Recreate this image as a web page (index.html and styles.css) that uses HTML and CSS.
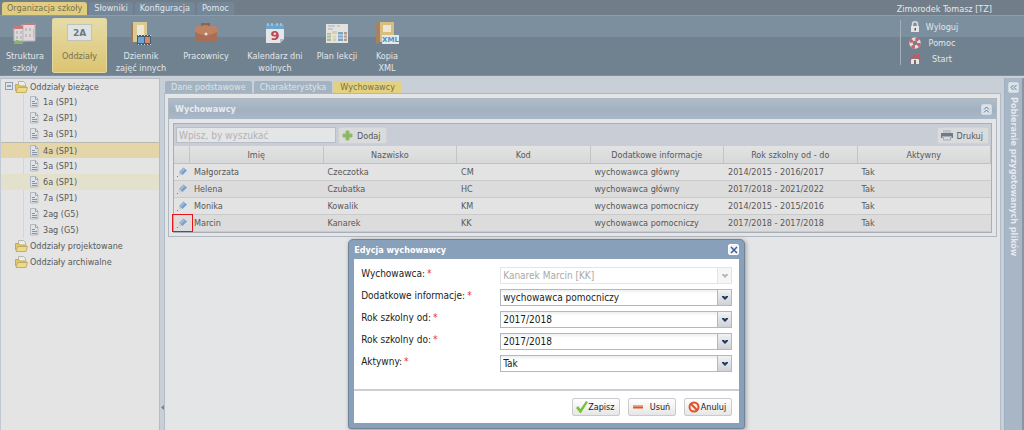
FILE: index.html
```html
<!DOCTYPE html>
<html lang="pl">
<head>
<meta charset="utf-8">
<title>Organizacja szkoły</title>
<meta name="viewport" content="width=device-width, initial-scale=1">
<link rel="stylesheet" href="styles.css">
</head>
<body>
<svg class="defs" aria-hidden="true">
  <symbol id="folder" viewBox="0 0 13 12">
    <path d="M3.500 5V.5h5l2 2V6" fill="#ecebe4" stroke="#b5b5ac"/>
    <path d="M.5 10V3.500h3L5 5h6v5" fill="#dcc66c" stroke="#c0ab62"/>
    <path d="M1 11.500 2.800 6.500h9.700L11 11.500z" fill="#ecd98c" stroke="#c4ae62"/>
  </symbol>
  <symbol id="leaf" viewBox="0 0 10 12">
    <path d="M1.500.5h5l2.500 2.500v8h-7.500z" fill="#dfe3e7" stroke="#b2b8c0"/>
    <path d="M6.500.5v3h2.500" fill="none" stroke="#9ba3ac"/>
    <path d="M3 5.500h3M3 7.500h5M3 9.500h5" stroke="#8493a6"/>
  </symbol>
  <symbol id="pencil" viewBox="0 0 12 12">
    <path d="M3 6 7.500 1.500 11 4.500 6.500 9z" fill="#7b9fc9"/>
    <path d="M4 6 8 2l1 1-4 4z" fill="#a5c1df"/>
    <path d="M3 6 6.500 9 3 9.500z" fill="#c5cfda"/>
    <path d="M1 10h1v1H1z" fill="#777"/>
  </symbol>
  <symbol id="down" viewBox="0 0 8 6"><path d="M1 1h2l1 1 1-1h2v1L4 5 1 2z" fill="currentColor"/></symbol>
</svg>

<header>
  <div class="menubar">
    <nav class="menu">
      <button class="menu-tab active">Organizacja szkoły</button>
      <button class="menu-tab">Słowniki</button>
      <button class="menu-tab">Konfiguracja</button>
      <button class="menu-tab">Pomoc</button>
    </nav>
    <span class="user">Zimorodek Tomasz [TZ]</span>
  </div>
  <div class="ribbon">
    <div class="tools">
      <button class="tool">
        <svg width="24" height="24" viewBox="0 0 24 24"><path d="M1 6 12 3v16H1z" fill="#d9dadb" stroke="#b9babd"/><path d="M10 2h12v17H10z" fill="#dfd8d8" stroke="#b8b3b5"/><path d="M1 4h9v3H1zM10 1h12v2H10z" fill="#c9797c"/><path d="M3 9h2v3H3zM7 9h2v3H7zM3 14h2v3H3zM7 14h2v3H7zM12 6h2v3h-2zM16 6h2v3h-2zM12 12h2v3h-2zM16 12h2v3h-2zM20 7h1v9h-1z" fill="#c3bbbf"/><path d="M1 22c0-4 4-5 5-3 3-1 4 1 4 3z" fill="#8db36b"/></svg>
        <span>Struktura szkoły</span></button>
      <button class="tool active">
        <svg width="26" height="24" viewBox="0 0 26 24"><rect x=".5" y="2.500" width="24" height="16" fill="#dfe3e3" stroke="#c2c4bb"/><text x="12.500" y="14" text-anchor="middle" class="room">2A</text></svg>
        <span>Oddziały</span></button>
      <button class="tool">
        <svg width="24" height="24" viewBox="0 0 24 24"><path d="M2 2l3-2v20l-3 2z" fill="#a5784f"/><path d="M4 0h14v20H4z" fill="#d9c994"/><path d="M8 3h7v11H8z" fill="#ece7d4"/><path d="M8 13h14v10H8z" fill="#465c70"/><path d="M9 15h6v6H9z" fill="#6aa5ce"/><path d="M16 15h5v6h-5z" fill="#d98569"/><path d="M9 13.500h13M9 22.500h13" stroke="#d8dde0" stroke-dasharray="1 2"/></svg>
        <span>Dziennik<br>zajęć innych</span></button>
      <button class="tool">
        <svg width="24" height="24" viewBox="0 0 24 24"><path d="M8 6V2h7v4" fill="none" stroke="#8b6656" stroke-width="2"/><rect x="1" y="4" width="22" height="16" rx="2" fill="#a86f56"/><path d="M1 6c0-1 1-2 2-2h18c1 0 2 1 2 2v4c-7 4-15 4-22 0z" fill="#bb8264"/><circle cx="12" cy="12" r="1.500" fill="#eee2c8"/></svg>
        <span>Pracownicy</span></button>
      <button class="tool">
        <svg width="20" height="24" viewBox="0 0 20 24"><path d="M1 2h18v15l-4 4H1z" fill="#e4e6e8"/><path d="M1 2h18v5H1z" fill="#6da4c8"/><path d="M3 1v3M7 1v3M12 1v3M16 1v3" stroke="#cbdde8"/><path d="M19 17h-4v4z" fill="#b5bbc0"/><text x="10" y="18" text-anchor="middle" class="day">9</text></svg>
        <span>Kalendarz dni wolnych</span></button>
      <button class="tool">
        <svg width="24" height="24" viewBox="0 0 24 24"><path d="M1 2h22v19H1z" fill="#e2e3e0"/><path d="M3 4h7M12 4h3M3 7h5" stroke="#a7afb2"/><path d="M2 11h4v8H2z" fill="#a5bf8f"/><path d="M7 9h5v3H7zM8 14h3v5H8z" fill="#dacf9d"/><path d="M13 10h5v9h-5z" fill="#79a6c4"/><path d="M19 10h3v9h-3z" fill="#b49a8c"/><path d="M1 13h21M1 16h21" stroke="#e2e3e0"/></svg>
        <span>Plan lekcji</span></button>
      <button class="tool">
        <svg width="24" height="24" viewBox="0 0 24 24"><path d="M1 1l4-1v20l-4 2z" fill="#a48263"/><path d="M5 0h14v20H5z" fill="#d8bd7e"/><path d="M8 3h8v7H8z" fill="#ece6d2"/><path d="M7 13h17v9H7z" fill="#e3e8ec"/><text x="15.500" y="20" text-anchor="middle" class="xml">XML</text></svg>
        <span>Kopia<br>XML</span></button>
    </div>
    <nav class="account">
      <a href="#"><svg width="12" height="12" viewBox="0 0 12 12"><path d="M3.500 6V3c0-3 5-3 5 0v3" fill="none" stroke="#d8dde0" stroke-width="1.500"/><path d="M2 5h8v6H2z" fill="#e3e5e6"/><path d="M5.500 7h1.500v2.500H5.500z" fill="#4d5a64"/></svg><span>Wyloguj</span></a>
      <a href="#"><svg width="12" height="12" viewBox="0 0 12 12"><circle cx="6" cy="6" r="4" fill="none" stroke="#e4dcdc" stroke-width="3.500"/><circle cx="6" cy="6" r="4" fill="none" stroke="#c8606a" stroke-width="3.500" stroke-dasharray="3.140 3.140"/></svg><span>Pomoc</span></a>
      <a href="#"><svg width="12" height="12" viewBox="0 0 12 12"><path d="M2 6h8v5H2z" fill="#e8e5e3"/><path d="M9 1h1.500v4H9zM0 6.500 6 1l6 5.500-1 1L6 3.500l-5 4z" fill="#c8565b"/><path d="M5 7h2v4H5z" fill="#7e6c68"/></svg><span>Start</span></a>
    </nav>
  </div>
</header>

<main class="workspace">
  <aside class="tree">
    <ul>
      <li class="node root"><svg class="toggle" width="9" height="9" viewBox="0 0 9 9"><rect x=".5" y=".5" width="7" height="7" fill="#dfe4e9" stroke="#8fa0b3"/><path d="M2 4h4" stroke="#53657a"/></svg><svg width="13" height="12"><use href="#folder"/></svg>Oddziały bieżące</li>
      <li>
        <ul class="leaves">
          <li class="node"><svg width="10" height="12"><use href="#leaf"/></svg>1a (SP1)</li>
          <li class="node"><svg width="10" height="12"><use href="#leaf"/></svg>2a (SP1)</li>
          <li class="node"><svg width="10" height="12"><use href="#leaf"/></svg>3a (SP1)</li>
          <li class="node selected"><svg width="10" height="12"><use href="#leaf"/></svg>4a (SP1)</li>
          <li class="node"><svg width="10" height="12"><use href="#leaf"/></svg>5a (SP1)</li>
          <li class="node hovered"><svg width="10" height="12"><use href="#leaf"/></svg>6a (SP1)</li>
          <li class="node"><svg width="10" height="12"><use href="#leaf"/></svg>7a (SP1)</li>
          <li class="node"><svg width="10" height="12"><use href="#leaf"/></svg>2ag (G5)</li>
          <li class="node"><svg width="10" height="12"><use href="#leaf"/></svg>3ag (G5)</li>
        </ul>
      </li>
      <li class="node branch"><svg width="13" height="12"><use href="#folder"/></svg>Oddziały projektowane</li>
      <li class="node branch"><svg width="13" height="12"><use href="#folder"/></svg>Oddziały archiwalne</li>
    </ul>
  </aside>
  <div class="splitter"><svg width="3" height="5" viewBox="0 0 3 5"><path d="M3 0v5L0 2.500z" fill="#7b848d"/></svg></div>

  <section class="content">
    <nav class="tabs">
      <button class="tab">Dane podstawowe</button>
      <button class="tab">Charakterystyka</button>
      <button class="tab active">Wychowawcy</button>
    </nav>
    <div class="page">
      <section class="panel">
        <header class="panel-head">
          <h2>Wychowawcy</h2>
          <button class="mini" aria-label="Zwiń panel"><svg width="7" height="7" viewBox="0 0 7 7"><path d="M1 3.500 3.500 1 6 3.500M1 6.500 3.500 4 6 6.500" fill="none" stroke="#65788c"/></svg></button>
        </header>
        <div class="grid">
          <div class="grid-bar">
            <input class="search" type="text" placeholder="Wpisz, by wyszukać" aria-label="Wyszukaj">
            <button class="btn"><svg width="11" height="11" viewBox="0 0 11 11"><path d="M4 1h3v3h3v3H7v3H4V7H1V4h3z" fill="#8cb760" stroke="#93bb70"/></svg>Dodaj</button>
            <button class="btn print"><svg width="12" height="11" viewBox="0 0 12 11"><path d="M2 0h8v3H2z" fill="#bfc5cb"/><path d="M0 3h12v5h-1.500V6h-9v2H0z" fill="#717b86"/><path d="M2.500 6.500h7V10h-7z" fill="#d8dbde" stroke="#a5acb3"/></svg>Drukuj</button>
          </div>
          <table>
            <colgroup><col class="col-edit"><col><col><col><col><col><col></colgroup>
            <thead>
              <tr><th></th><th>Imię</th><th>Nazwisko</th><th>Kod</th><th>Dodatkowe informacje</th><th>Rok szkolny od - do</th><th>Aktywny</th></tr>
            </thead>
            <tbody>
              <tr><td><button class="edit" aria-label="Edytuj"><svg width="12" height="12"><use href="#pencil"/></svg></button></td><td>Małgorzata</td><td>Czeczotka</td><td>CM</td><td>wychowawca główny</td><td>2014/2015 - 2016/2017</td><td>Tak</td></tr>
              <tr><td><button class="edit" aria-label="Edytuj"><svg width="12" height="12"><use href="#pencil"/></svg></button></td><td>Helena</td><td>Czubatka</td><td>HC</td><td>wychowawca główny</td><td>2017/2018 - 2021/2022</td><td>Tak</td></tr>
              <tr><td><button class="edit" aria-label="Edytuj"><svg width="12" height="12"><use href="#pencil"/></svg></button></td><td>Monika</td><td>Kowalik</td><td>KM</td><td>wychowawca pomocniczy</td><td>2014/2015 - 2015/2016</td><td>Tak</td></tr>
              <tr><td><button class="edit marked" aria-label="Edytuj"><svg width="12" height="12"><use href="#pencil"/></svg></button></td><td>Marcin</td><td>Kanarek</td><td>KK</td><td>wychowawca pomocniczy</td><td>2017/2018 - 2017/2018</td><td>Tak</td></tr>
            </tbody>
          </table>
        </div>
      </section>
    </div>
  </section>

  <aside class="files">
    <button class="mini" aria-label="Rozwiń panel"><svg width="7" height="7" viewBox="0 0 7 7"><path d="M3.500 1 1 3.500 3.500 6M6.500 1 4 3.500 6.500 6" fill="none" stroke="#65788c"/></svg></button>
    <span>Pobieranie przygotowanych plików</span>
  </aside>
</main>

<form class="dialog" role="dialog" aria-labelledby="dialog-title">
  <header class="dialog-head">
    <h2 id="dialog-title">Edycja wychowawcy</h2>
    <button type="button" class="mini close" aria-label="Zamknij"><svg width="8" height="8" viewBox="0 0 8 8"><path d="M1 1l6 6M7 1 1 7" stroke="#3d5f96" stroke-width="1.500"/></svg></button>
  </header>
  <div class="dialog-body">
    <div class="fields">
      <div class="field"><label for="who">Wychowawca:<b>*</b></label><div class="combo disabled"><select id="who" disabled><option>Kanarek Marcin [KK]</option></select><span class="arrow"><svg width="8" height="6"><use href="#down"/></svg></span></div></div>
      <div class="field"><label for="info">Dodatkowe informacje:<b>*</b></label><div class="combo"><select id="info"><option>wychowawca pomocniczy</option><option>wychowawca główny</option></select><span class="arrow"><svg width="8" height="6"><use href="#down"/></svg></span></div></div>
      <div class="field"><label for="from">Rok szkolny od:<b>*</b></label><div class="combo"><select id="from"><option>2017/2018</option></select><span class="arrow"><svg width="8" height="6"><use href="#down"/></svg></span></div></div>
      <div class="field"><label for="to">Rok szkolny do:<b>*</b></label><div class="combo"><select id="to"><option>2017/2018</option></select><span class="arrow"><svg width="8" height="6"><use href="#down"/></svg></span></div></div>
      <div class="field"><label for="active">Aktywny:<b>*</b></label><div class="combo"><select id="active"><option>Tak</option><option>Nie</option></select><span class="arrow"><svg width="8" height="6"><use href="#down"/></svg></span></div></div>
    </div>
    <footer class="actions">
      <button type="submit" class="action"><svg width="12" height="12" viewBox="0 0 12 12"><path d="M0 7 2 5l2.500 3L10 0l2 1-7 11H4z" fill="#7fbf3c"/></svg>Zapisz</button>
      <button type="button" class="action"><svg width="12" height="12" viewBox="0 0 12 12"><path d="M1 4.500h10v3H1z" fill="#dd5737"/><path d="M1 5h10v1H1z" fill="#ef8a66"/></svg>Usuń</button>
      <button type="button" class="action"><svg width="12" height="12" viewBox="0 0 12 12"><circle cx="6" cy="6" r="4.500" fill="#fbeee6" stroke="#d9532f" stroke-width="2"/><path d="M3 3l6 6" stroke="#d9532f" stroke-width="2"/></svg>Anuluj</button>
    </footer>
  </div>
</form>
</body>
</html>
```

FILE: styles.css
```css
* { box-sizing: border-box; }

body {
  margin: 0;
  min-height: 100vh;
  display: flex;
  flex-direction: column;
  overflow: hidden;
  position: relative;
  background: #c9cfd7;
  color: #585858;
  font: 9px/14px "DejaVu Sans Condensed", "DejaVu Sans", sans-serif;
}

button, select, input { font: inherit; color: inherit; margin: 0; }
button { border: 0; padding: 0; background: none; cursor: pointer; white-space: nowrap; }
h2 { margin: 0; font-size: 9px; line-height: 14px; }
ul { margin: 0; padding: 0; list-style: none; }
svg { flex: none; display: block; }
.defs { display: none; }

/* Top menu */
.menubar { display: flex; justify-content: space-between; background: #717d88; height: 15px; }
.menu { display: flex; gap: 2px; padding: 2px 0 0 2px; }
.menu-tab { padding: 0 5px; line-height: 13px; color: #e2e6ea; background: #748798; border-radius: 3px 3px 0 0; }
.menu-tab.active { color: #77714f; background: #e0cd7f; }
.user { color: #e6e9ec; padding: 2px 32px 0 0; }

/* Ribbon */
.ribbon {
  display: flex;
  justify-content: space-between;
  height: 61px;
  border-top: 1px solid #8c9cab;
  border-bottom: 1px solid #7e8e9b;
  background: linear-gradient(#7c8f9f 0 21px, #708290 21px);
}
.tools { display: flex; gap: 2px; padding: 2px 0; }
.tool {
  display: flex;
  flex-direction: column;
  align-items: center;
  width: 72px;
  padding: 4px 6px 0;
  color: #e2e6ea;
  line-height: 12px;
  white-space: normal;
  border-radius: 2px;
}
.tool span { margin-top: 4px; }
.tool:nth-child(1) { width: 50px; padding-inline: 0; }
.tool:nth-child(2) { width: 55px; padding-inline: 0; }
.tool:nth-child(3) { width: 64px; padding-inline: 0; }
.tool:nth-child(4) { width: 62px; padding-inline: 0; }
.tool:nth-child(6) { width: 48px; padding-inline: 0; }
.tool:nth-child(7) { width: 48px; }
.tool.active { color: #77714f; background: linear-gradient(#e6dba9, #dcc571); border: 1px solid #e3d79f; padding-top: 3px; }
.room, .day, .xml { font-family: "DejaVu Sans", sans-serif; font-weight: bold; }
.room { font-size: 9px; fill: #6c7884; }
.day { font-size: 13px; fill: #c0494f; }
.xml { font-size: 7px; fill: #4f92bf; }

.account { display: flex; flex-direction: column; gap: 2px; margin: 4px 0 10px; width: 124px; padding-left: 8px; border-left: 1px solid #a3b0bb; }
.account a { display: flex; gap: 4px; align-items: center; height: 14px; color: #e2e6ea; text-decoration: none; }
.account span { width: 34px; text-align: center; }

/* Work area */
.workspace { display: flex; flex: 1; padding-top: 2px; }
.tree { width: 160px; background: #e4e4e4; border: 1px solid #b5bcc6; border-left-color: #c3c9d2; border-bottom: 0; }
.node { display: flex; align-items: center; gap: 2px; height: 16px; white-space: nowrap; }
.root { height: 15px; padding-left: 4px; }
.branch { padding-left: 14px; }
.toggle { margin-right: -1px; }
.leaves .node { padding-left: 28px; gap: 4px; }
.leaves { background: linear-gradient(#d4d4d4, #d4d4d4) 22px 0 / 1px 100% no-repeat; }
.leaves .selected { background: #e4d6a8; border-top: 1px solid #b9b9b0; }
.leaves .hovered { background: #e3e1cb; }
.splitter { width: 4px; display: flex; align-items: flex-end; justify-content: center; padding-bottom: 20px; }

.content { flex: 1; min-width: 0; display: flex; flex-direction: column; }
.tabs { display: flex; gap: 2px; height: 16px; padding: 3px 0 0 1px; border-bottom: 1px solid #abb8c7; }
.tab { padding: 0 6px; line-height: 12px; color: #dfe4e8; background: #a3b3c2; border-radius: 2px 2px 0 0; }
.tab.active { color: #77714f; background: #e3d180; }
.page { flex: 1; background: #e4e5e6; border: 1px solid #b3bdc9; border-width: 0 1px; padding: 4px 3px 0; }
.panel { border: 1px solid #b1b7bf; padding-bottom: 3px; }
.panel-head { display: flex; justify-content: space-between; align-items: center; height: 20px; padding: 0 4px 0 6px; color: #e9ecef; background: linear-gradient(#afbdcb, #a2b1c0 55%, #a9b9c9); }
.mini { display: flex; align-items: center; justify-content: center; width: 11px; height: 11px; background: #dae3ec; border: 1px solid #cfd9e3; border-radius: 2px; }
.grid { margin: 4px 4px 0; border: 1px solid #a9afb8; }
.grid-bar { display: flex; gap: 2px; height: 22px; padding: 3px 2px 2px; background: #c8cdd6; }
.search { width: 160px; height: 16px; padding: 0 2px; background: #e4e5e6; border: 1px solid #b8bec7; font-size: 10px; }
.search::placeholder { color: #b3b3b3; }
.btn { display: flex; align-items: center; gap: 4px; height: 17px; padding: 0 5px 0 3px; background: #dadbdc; border: 1px solid #cfd1d3; border-radius: 2px; }
.print { margin-left: auto; }

table { width: 100%; border-collapse: separate; border-spacing: 0; table-layout: fixed; }
.col-edit { width: 16px; }
th { height: 18px; padding: 0; font-weight: normal; border-right: 1px solid #c3c4c6; border-bottom: 1px solid #c0c1c3; background: linear-gradient(#e3e3e3, #d7d8d9); }
td { height: 17px; padding: 0 0 0 4px; line-height: 14px; white-space: nowrap; border-bottom: 1px solid #c9cacb; background: #e3e3e3; }
tr:nth-child(even) td { background: #dcdcdc; }
td:first-child { padding: 0; }
.edit { position: relative; display: flex; width: 16px; justify-content: center; }
.marked::after { content: ""; position: absolute; inset: -3px -3px -3px -2px; border: 1px solid #e8141c; }

.files { display: flex; flex-direction: column; align-items: center; gap: 4px; width: 20px; margin-left: 3px; padding: 4px 0 0; background: #a8b6c5; border-left: 1px solid #9fb0c2; border-right: 2px solid #8896a4; }
.files span { writing-mode: vertical-rl; color: #e6eaee; font-weight: bold; white-space: nowrap; }

/* Edit window */
.dialog { position: absolute; top: 239px; left: 34%; width: 397px; padding: 0 5px 5px; background: #88a0b9; border: 1px solid #6f8499; border-radius: 5px 5px 3px 3px; box-shadow: 1px 1px 4px #999; color: #1c1c1c; }
.dialog-head { display: flex; justify-content: space-between; align-items: center; height: 19px; color: #fff; }
.close { background: #eef4fb; border-color: #fff; }
.dialog-body { background: #fff; font-size: 10px; }
.fields { display: flex; flex-direction: column; gap: 5px; padding: 8px 7px 17px; border-bottom: 2px solid #cbced3; }
.field { display: grid; grid-template-columns: 139px 1fr; height: 17px; }
.field b { color: #e8333a; font-weight: normal; margin-left: 2px; }
.combo { display: grid; grid-template-columns: 1fr 14px; border: 1px solid #b2b8c0; background: linear-gradient(#edeff1, #fff 4px); }
.combo select { grid-area: 1 / 1 / 2 / 3; width: 100%; padding: 0 16px 0 2px; border: 0; border-radius: 0; background: none; appearance: none; line-height: 15px; }
.arrow { grid-area: 1 / 2; display: flex; align-items: center; justify-content: center; pointer-events: none; color: #1f3a63; background: linear-gradient(#f1f2f3, #ced1d6); border-left: 1px solid #b2b8c0; }
.combo.disabled { color: #a9a9a9; border-color: #e2e4e6; background: #fff; }
.combo.disabled select { opacity: 1; }
.combo.disabled .arrow { color: #b5bac1; background: #f6f6f7; border-color: #e2e4e6; }
.actions { display: flex; justify-content: flex-end; gap: 8px; padding: 7px; font-size: 9px; }
.action { display: flex; align-items: center; justify-content: space-between; width: 48px; height: 18px; padding: 0 5px 0 3px; background: linear-gradient(#fff, #e6e6e6); border: 1px solid #c9cbce; border-radius: 2px; }
```
